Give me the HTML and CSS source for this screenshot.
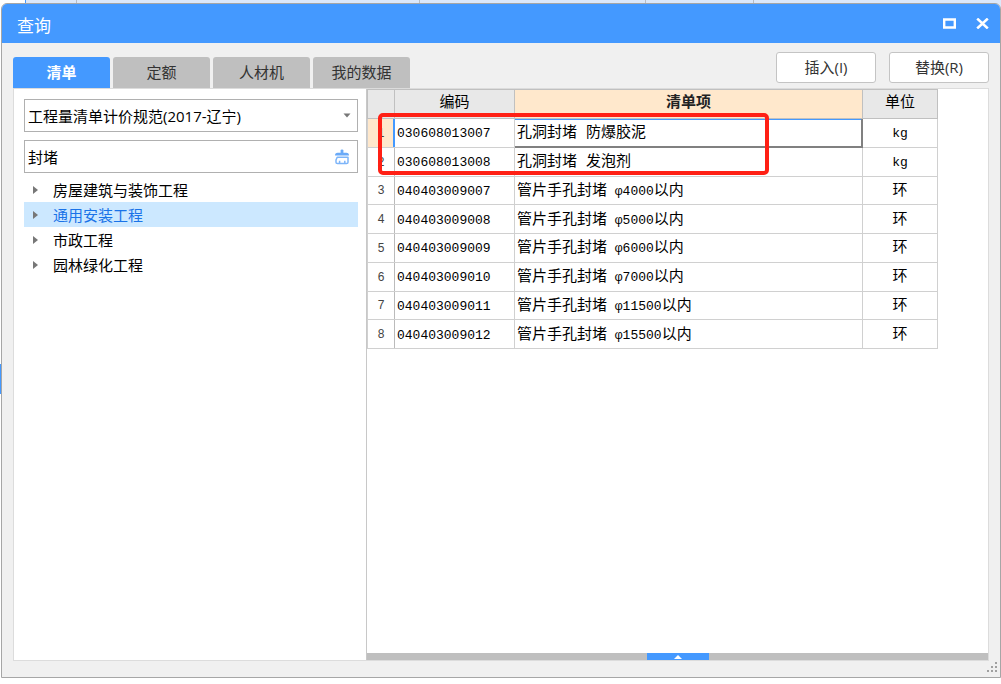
FILE: index.html
```html
<!DOCTYPE html>
<html lang="zh-CN">
<head>
<meta charset="utf-8">
<title>查询</title>
<link rel="stylesheet" href="styles.css">
</head>
<body>
<div class="backdrop" aria-hidden="true">
  <div class="ribbon"><i class="cell first"></i><i class="cell wide"></i><i class="cell mid"></i><i class="cell small"></i></div>
  <div class="gutter"></div>
</div>
<main class="dialog">
  <header class="titlebar">
    <h1 class="title">查询</h1>
    <button class="winbtn" type="button" aria-label="最大化"><svg width="13" height="11" viewBox="0 0 13 11"><path d="M1.2 1.5H11.8V9.5H1.2Z" fill="none" stroke="#fff" stroke-width="2.4"/></svg></button>
    <button class="winbtn" type="button" aria-label="关闭"><svg width="13" height="11" viewBox="0 0 13 11"><path d="M1.2 .6L11.8 10.4M11.8 .6L1.2 10.4" fill="none" stroke="#fff" stroke-width="2.6"/></svg></button>
  </header>
  <div class="toolbar">
    <nav class="tabs" role="tablist">
      <button class="tab active" type="button" role="tab" aria-selected="true">清单</button>
      <button class="tab" type="button" role="tab">定额</button>
      <button class="tab" type="button" role="tab">人材机</button>
      <button class="tab" type="button" role="tab">我的数据</button>
    </nav>
    <div class="actions">
      <button class="action" type="button">插入(I)</button>
      <button class="action" type="button">替换(R)</button>
    </div>
  </div>
  <div class="content">
    <aside class="side">
      <div class="field">
        <select class="control" aria-label="清单规范"><option>工程量清单计价规范(2017-辽宁)</option></select>
        <svg class="caret" width="8" height="5" viewBox="0 0 8 5"><path d="M.5 .5H7.5L4 4.5Z" fill="#777"/></svg>
      </div>
      <div class="field">
        <input class="control" type="text" value="封堵" aria-label="搜索">
        <button class="clear" type="button" aria-label="清除"><svg width="16" height="16" viewBox="0 0 16 16"><path d="M6.6 4V1.4Q6.6 .4 8 .4T9.4 1.4V4Z" fill="#6aaaf8"/><path d="M1 6.4Q1 3.8 3.6 3.8H12.4Q15 3.8 15 6.4Z" fill="#6aaaf8"/><path d="M3.2 8.2L2 11V13.2Q2 14.6 3.4 14.6H12.6Q14 14.6 14 13.2V8.2ZM5.6 14V11.8M10.8 14V11.8" fill="none" stroke="#7db5f9" stroke-width="1.5" stroke-linejoin="round"/></svg></button>
      </div>
      <ul class="tree">
        <li class="node">房屋建筑与装饰工程</li>
        <li class="node selected">通用安装工程</li>
        <li class="node">市政工程</li>
        <li class="node">园林绿化工程</li>
      </ul>
    </aside>
    <section class="results">
      <div class="tablewrap">
        <table class="grid">
          <colgroup><col class="c-no"><col class="c-code"><col><col class="c-unit"></colgroup>
          <thead><tr><th></th><th>编码</th><th class="current">清单项</th><th>单位</th></tr></thead>
          <tbody>
            <tr class="active-row"><th>1</th><td><span class="num">030608013007</span></td><td class="focus">孔洞封堵 防爆胶泥</td><td><span class="num">kg</span></td></tr>
            <tr><th>2</th><td><span class="num">030608013008</span></td><td>孔洞封堵 发泡剂</td><td><span class="num">kg</span></td></tr>
            <tr><th>3</th><td><span class="num">040403009007</span></td><td>管片手孔封堵<span class="num"> φ4000</span>以内</td><td>环</td></tr>
            <tr><th>4</th><td><span class="num">040403009008</span></td><td>管片手孔封堵<span class="num"> φ5000</span>以内</td><td>环</td></tr>
            <tr><th>5</th><td><span class="num">040403009009</span></td><td>管片手孔封堵<span class="num"> φ6000</span>以内</td><td>环</td></tr>
            <tr><th>6</th><td><span class="num">040403009010</span></td><td>管片手孔封堵<span class="num"> φ7000</span>以内</td><td>环</td></tr>
            <tr><th>7</th><td><span class="num">040403009011</span></td><td>管片手孔封堵<span class="num"> φ11500</span>以内</td><td>环</td></tr>
            <tr><th>8</th><td><span class="num">040403009012</span></td><td>管片手孔封堵<span class="num"> φ15500</span>以内</td><td>环</td></tr>
          </tbody>
        </table>
        <div class="highlight"></div>
      </div>
      <div class="splitter"><button class="expand" type="button" aria-label="展开"><svg width="8" height="4" viewBox="0 0 8 4"><path d="M0 4L4 0L8 4Z" fill="#fff"/></svg></button></div>
    </section>
  </div>
  <footer class="status"><svg width="11" height="11" viewBox="0 0 11 11"><path d="M8 0h2v2h-2zM4 4h2v2H4zM8 4h2v2h-2zM0 8h2v2H0zM4 8h2v2H4zM8 8h2v2h-2z" fill="#a0a0a0"/></svg></footer>
</main>
</body>
</html>
```
FILE: styles.css
```css
* { box-sizing: border-box; }
body {
  margin: 0;
  height: 100vh;
  display: flex;
  padding: 3px 0 6px 1px;
  background: #fff;
  color: #000;
  font: 15px/20px "Open Sans", "Noto Sans CJK SC", sans-serif;
}
button, input, select { font: inherit; color: inherit; margin: 0; padding: 0; border: 0; background: none; }
svg { display: block; }

.backdrop { position: absolute; inset: 0; z-index: -1; overflow: hidden; }
.ribbon { display: flex; height: 8px; margin-left: 25px; background: #dce8fa; border-left: 1px solid #4499ff; }
.cell { border-right: 1px solid #b8bcc4; }
.first { width: 51px; }
.wide { width: 343px; }
.mid { width: 226px; }
.small { width: 108px; }
.gutter { position: absolute; left: 0; top: 364px; width: 1px; height: 30px; background: #4499ff; }

.dialog {
  flex: 1;
  min-width: 0;
  display: flex;
  flex-direction: column;
  background: #f0f0f0;
  border: 1px solid #a6a6a6;
  border-radius: 6px 6px 0 0;
  overflow: hidden;
}
.titlebar { display: flex; align-items: center; gap: 20px; height: 39px; padding: 0 11px 0 15px; background: #4499ff; color: #fff; }
.title { flex: 1; margin: 0; padding-top: 4px; font-size: 17px; font-weight: 400; line-height: 24px; }

.toolbar { display: flex; justify-content: space-between; align-items: flex-end; height: 45px; padding: 0 11px; }
.tabs { display: flex; gap: 3px; }
.tab { width: 97px; height: 31px; padding-bottom: 2px; background: #bfbfbf; color: #333; border-radius: 3px 3px 0 0; }
.tab.active { background: #4499ff; color: #fff; font-weight: 700; }
.actions { display: flex; gap: 13px; padding-bottom: 5px; }
.action { width: 100px; height: 31px; padding-bottom: 2px; background: #fff; border: 1px solid #c4c4c4; border-radius: 3px; color: #333; }

.content { flex: 1; display: flex; margin: 0 11px; border: 1px solid #dcdcdc; background: #fff; min-height: 0; }
.side { width: 353px; padding: 10px 8px 0 10px; border-right: 1px solid #c8c8c8; }
.field { position: relative; height: 33px; margin-bottom: 8px; border: 1px solid #b0b0b0; }
.control { display: block; width: 100%; height: 100%; padding: 0 30px 0 3px; appearance: none; outline: 0; }
.caret { position: absolute; right: 6px; top: 13px; pointer-events: none; }
.clear { position: absolute; right: 7px; top: 8px; }
.field:has(+ .tree) { margin-bottom: 4px; }
.tree { list-style: none; margin: 0; padding: 0; }
.node { display: flex; align-items: center; gap: 15px; height: 25px; padding-left: 9px; }
.node::before { content: ""; border: solid transparent; border-width: 4px 0 4px 5px; border-left-color: #777; }
.selected { background: #cce8ff; color: #1a73e8; }

.results { flex: 1; min-width: 0; display: flex; flex-direction: column; }
.tablewrap { flex: 1; position: relative; padding-right: 50px; }
.grid { width: 100%; height: 260px; table-layout: fixed; border-collapse: collapse; font: 15px/20px "Liberation Mono", "Noto Sans CJK SC", monospace; }
.grid thead tr { height: 29px; }
.grid tbody tr { height: 28px; }
.c-no { width: 27px; }
.c-code { width: 120px; }
.c-unit { width: 75px; }
.grid th, .grid td { padding: 3px 0 0 2px; border: 1px solid #d0d0d0; text-align: left; font-weight: 400; line-height: 20px; vertical-align: middle; white-space: nowrap; }
.grid thead th { background: #e8e8e8; border-color: #c0c0c0; text-align: center; padding: 0; }
.grid thead .current { background: #ffe8cc; font-weight: 700; color: #222; }
.grid tbody th { padding: 0; text-align: center; font: 12px/20px "Liberation Sans", sans-serif; color: #444; border-right-color: #bbb; }
.grid tbody td:last-child { text-align: center; padding-left: 0; }
.grid .active-row th { background: #ffe8cc; box-shadow: inset -1px 0 #4499ff; border-right-color: #4499ff; }
.grid .focus { border-color: #808080; border-top-color: #4499ff; box-shadow: inset -1px -1px #808080, inset 0 1px #4499ff; }
.num { font-size: 13px; white-space: pre; }
.highlight { position: absolute; left: 11px; top: 24px; width: 391px; height: 62px; border: 4px solid #ff2015; border-radius: 5px; }
.splitter { display: flex; justify-content: center; height: 7px; background: #bfbfbf; }
.expand { display: flex; justify-content: center; align-items: center; width: 62px; height: 7px; background: #4499ff; }
.status { display: flex; justify-content: flex-end; align-items: flex-start; height: 16px; padding: 1px 2px 0 0; }
```
